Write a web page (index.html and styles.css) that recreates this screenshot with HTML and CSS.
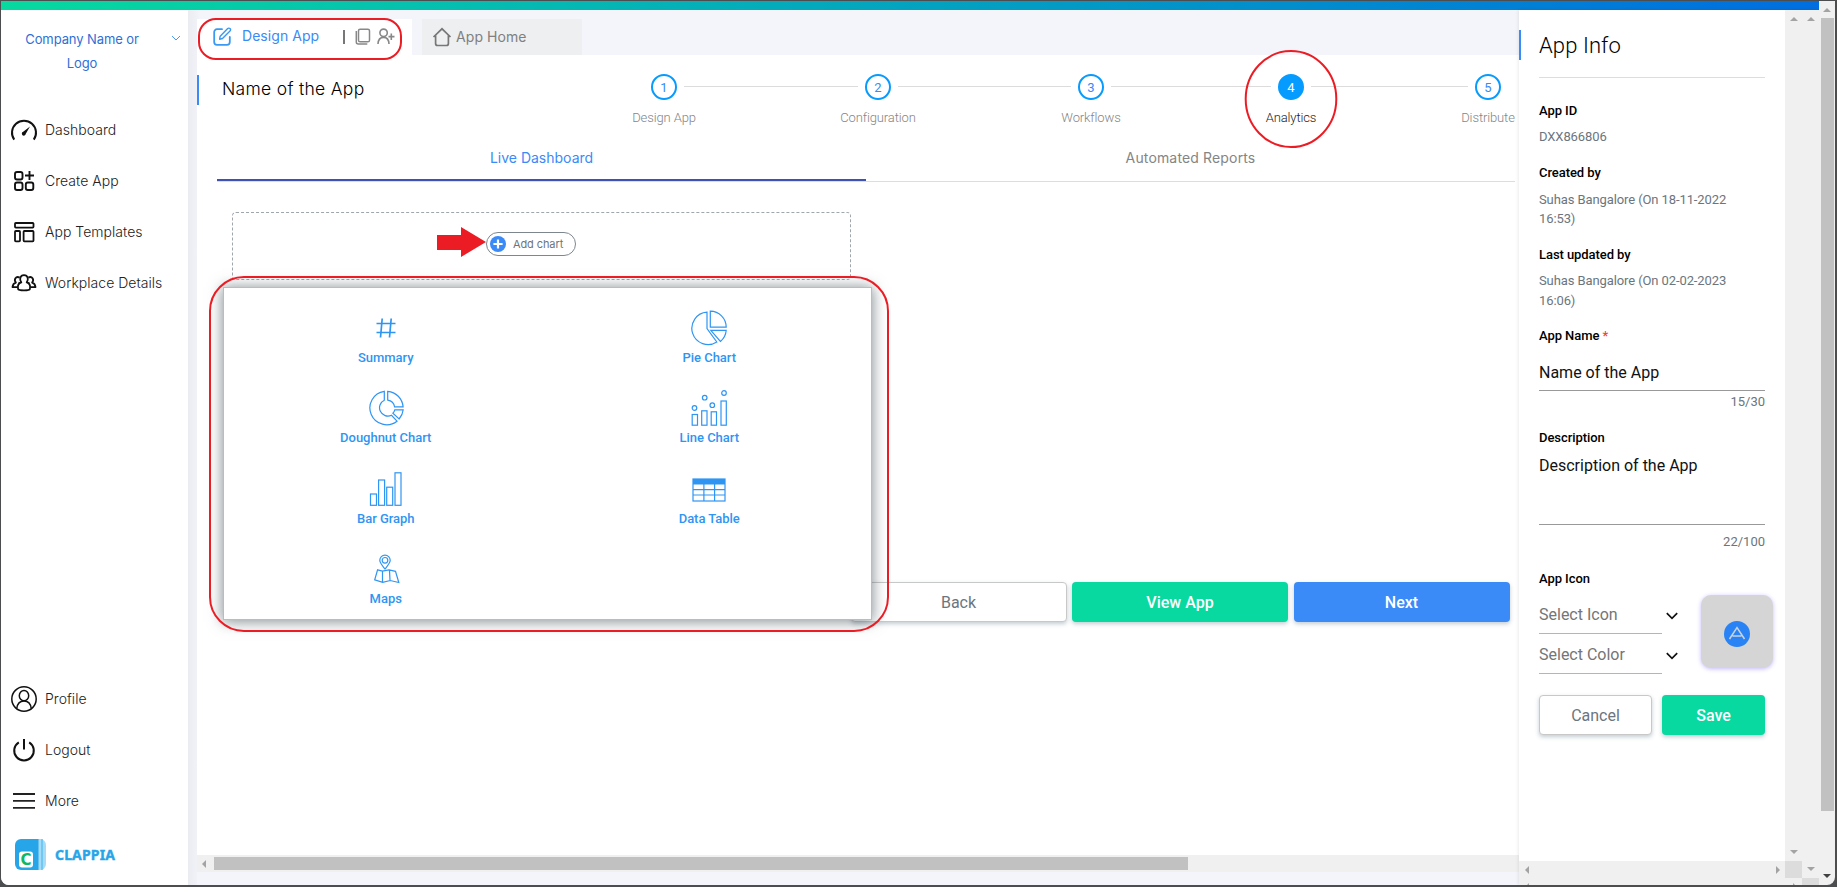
FILE: index.html
```html
<!DOCTYPE html>
<html lang="en">
<head>
<meta charset="utf-8">
<title>Clappia - Analytics</title>
<link rel="stylesheet" href="styles.css">
</head>
<body>
<div class="window">
  <div class="app">
    <div class="topbar"></div>
    <div class="columns">
      <aside class="sidebar">
        <div class="company">
          <span class="company-name">Company Name or Logo</span>
          <svg class="company-caret" width="10" height="6" viewBox="0 0 10 6"><path d="M1 1l4 4 4-4" fill="none" stroke="#4a9af5" stroke-width="1"/></svg>
        </div>
        <nav class="nav">
          <a class="nav-item"><svg class="nav-icon" viewBox="0 0 30 30"><path d="M5.2 24.6A12 12 0 1 1 24.8 24.6" fill="none" stroke="#111" stroke-width="2"/><path d="M21 11.5l-4.2 7.3a2 2 0 1 1-2.6-2z" fill="#111"/></svg><span>Dashboard</span></a>
          <a class="nav-item"><svg class="nav-icon" viewBox="0 0 30 30"><g fill="none" stroke="#111" stroke-width="1.9"><rect x="6" y="6" width="7.5" height="7.5" rx="2"/><rect x="6" y="16.5" width="7.5" height="7.5" rx="2"/><rect x="16.8" y="16.5" width="7.5" height="7.5" rx="2"/><path d="M20.5 5v9M16 9.5h9"/></g></svg><span>Create App</span></a>
          <a class="nav-item"><svg class="nav-icon" viewBox="0 0 30 30"><g fill="none" stroke="#111" stroke-width="1.8"><rect x="6" y="6" width="18.5" height="4.6" rx=".8"/><rect x="6" y="14" width="5" height="10.4" rx=".8"/><rect x="14.6" y="14" width="9.9" height="10.4" rx=".8"/></g></svg><span>App Templates</span></a>
          <a class="nav-item"><svg class="nav-icon" viewBox="0 0 30 30"><g fill="none" stroke="#111" stroke-width="1.8" stroke-linejoin="round"><path d="M12.300 14.400c-2-2.600-1.500-7.300 2.700-7.300s4.700 4.700 2.700 7.300c2.200.7 4 3 3.200 6.600-.4 1.800-11.400 1.800-11.800 0-.8-3.600 1-5.900 3.200-6.600z"/><path d="M10.700 9.600c-3.900-2-6.200 2.300-3.800 5-2.100.6-3.200 2.300-3.400 4.600h5.300M19.300 9.600c3.900-2 6.200 2.300 3.800 5 2.100.6 3.200 2.300 3.400 4.600h-5.300M9.500 14.600l1.300.7M20.500 14.600l-1.300.7"/></g></svg><span>Workplace Details</span></a>
        </nav>
        <nav class="nav nav-bottom">
          <a class="nav-item"><svg class="nav-icon" viewBox="0 0 30 30"><g fill="none" stroke="#111" stroke-width="1.5"><circle cx="15" cy="15" r="12.200"/><ellipse cx="15" cy="11.700" rx="4.700" ry="5.100"/><path d="M7.800 24.500c.5-4.500 3.300-7.500 7.200-7.500s6.700 3 7.200 7.500"/></g></svg><span>Profile</span></a>
          <a class="nav-item"><svg class="nav-icon" viewBox="0 0 30 30"><g fill="none" stroke="#111" stroke-width="2"><path d="M9.800 7.300a9.800 9.800 0 1 0 10.400 0"/><path d="M15 4v10.500"/></g></svg><span>Logout</span></a>
          <a class="nav-item"><svg class="nav-icon" viewBox="0 0 30 30"><path d="M4 8h22M4 14.900h22M4 21.800h22" stroke="#222" stroke-width="1.800"/></svg><span>More</span></a>
        </nav>
        <div class="brand">
          <svg width="32" height="31" viewBox="0 0 32 31"><rect x="10" width="21" height="31" rx="6" fill="#a5dbf7"/><path d="M27 0v31" stroke="#5fc0f0" stroke-width="1.500"/><path d="M6 0h17.500v31H6a6 6 0 0 1-6-6V6a6 6 0 0 1 6-6z" fill="#27a5e9"/><rect x="4" y="12.500" width="14" height="16" rx="3" fill="#fff"/></svg>
          <span class="brand-letter">C</span>
          <span class="brand-name">CLAPPIA</span>
        </div>
      </aside>

      <main class="main">
        <div class="apptabs">
          <div class="apptab active">
            <svg width="19" height="19" viewBox="0 0 19 19"><g fill="none" stroke="#3a9af2" stroke-width="1.800" stroke-linejoin="round" stroke-linecap="round"><path d="M9 2.200H4A2.800 2.800 0 0 0 1.200 5v10A2.800 2.800 0 0 0 4 17.800h10a2.800 2.800 0 0 0 2.800-2.800v-5"/><path d="M6.600 12.200l.6-3 7.500-7.600a1.500 1.500 0 0 1 2.300 2.300l-7.500 7.600z" stroke-width="1.400"/></g></svg>
            <span class="apptab-label">Design App</span>
            <span class="apptab-sep"></span>
            <svg class="copy" width="16" height="17" viewBox="0 0 16 17"><g fill="none" stroke="#888" stroke-width="1.500"><rect x="3.500" y="1.200" width="11" height="12.600" rx="1.600"/><path d="M1.300 3v11a2 2 0 0 0 2 2h9"/></g></svg>
            <svg class="adduser" width="18" height="17" viewBox="0 0 18 17"><g fill="none" stroke="#888" stroke-width="1.600"><circle cx="6.600" cy="4.800" r="3.700"/><path d="M1 16c.2-4.200 2.200-6.600 5.600-6.600s5.200 2.400 5.400 6.600M14.300 5.500v6.400M11.500 8.600h6"/></g></svg>
          </div>
          <div class="apptab home">
            <svg width="20" height="20" viewBox="0 0 20 20"><path d="M1.500 10L10 1.800 18.500 10M3.600 8.500v8c0 1.400.6 2 2 2h8.800c1.400 0 2-.6 2-2v-8" fill="none" stroke="#777" stroke-width="1.700"/></svg>
            <span>App Home</span>
          </div>
        </div>
        <div class="content">
          <header class="head">
            <h1 class="title">Name of the App</h1>
            <div class="stepper">
              <div class="step"><span class="dot">1</span><span class="step-label">Design App</span></div>
              <i class="line l1"></i>
              <div class="step"><span class="dot">2</span><span class="step-label">Configuration</span></div>
              <i class="line l2"></i>
              <div class="step"><span class="dot">3</span><span class="step-label">Workflows</span></div>
              <i class="line l3"></i>
              <div class="step current"><span class="dot">4</span><span class="step-label">Analytics</span></div>
              <i class="line l4"></i>
              <div class="step"><span class="dot">5</span><span class="step-label">Distribute</span></div>
            </div>
          </header>
          <div class="tabs">
            <div class="tab selected">Live Dashboard</div>
            <div class="tab reports">Automated Reports</div>
          </div>
          <section class="dropzone">
            <button class="addchart"><svg width="16" height="16" viewBox="0 0 16 16"><circle cx="8" cy="8" r="8" fill="#3a8af8"/><path d="M8 3.400v9.200M3.400 8h9.200" stroke="#fff" stroke-width="2.200"/></svg><span>Add chart</span></button>
          </section>
          <div class="actions">
            <button class="btn outline">Back</button>
            <button class="btn green">View App</button>
            <button class="btn blue">Next</button>
          </div>
          <div class="hscroll"><span class="tri left"></span><span class="thumb"></span></div>

          <div class="picker">
            <div class="choice"><svg width="36" height="36" viewBox="0 0 36 36"><path d="M14.200 8.500l-1.700 19M23.200 8.500l-1.700 19M8.500 13.500h19M8.500 22.500h19" fill="none" stroke="#2f95f3" stroke-width="1.700"/></svg><span>Summary</span></div>
            <div class="choice"><svg width="36" height="36" viewBox="0 0 36 36"><g class="thin"><path d="M16 2.200A16.200 16.200 0 1 0 25.800 32L16 18.500z"/><path d="M19.300 1.200v15.900h15.900A16 16 0 0 0 19.300 1.200z"/><path d="M19.800 20.300h15.400a16 16 0 0 1-5.800 11.200z"/></g></svg><span>Pie Chart</span></div>
            <div class="choice"><svg width="36" height="36" viewBox="0 0 36 36"><g class="thin"><path d="M16.300 1.300A16.800 16.800 0 1 0 29 31.200l-5.500-5.900A8.200 8.200 0 1 1 16.300 10.200z"/><path d="M19.700 1.300v8.800a8.200 8.200 0 0 1 6.900 6.800h8.500A16.900 16.900 0 0 0 19.700 1.300z"/><path d="M26.800 19.800h8.400a16.500 16.500 0 0 1-4.100 9.200l-6.200-5.800a8 8 0 0 0 1.900-3.400z"/></g></svg><span>Doughnut Chart</span></div>
            <div class="choice"><svg width="36" height="36" viewBox="0 0 36 36"><g class="thin"><rect x="1.200" y="24.500" width="5.300" height="10.700"/><rect x="10.700" y="20.800" width="5.300" height="14.400"/><rect x="20.200" y="21.800" width="5.300" height="13.400"/><rect x="30" y="11" width="5.300" height="24.200"/><circle cx="3.500" cy="18" r="2.300"/><circle cx="13.700" cy="7.700" r="2.300"/><circle cx="21.300" cy="15.200" r="2.300"/><circle cx="33" cy="3" r="2.300"/></g></svg><span>Line Chart</span></div>
            <div class="choice"><svg width="36" height="36" viewBox="0 0 36 36"><g class="thin"><rect x="2.500" y="23" width="6" height="11.300"/><rect x="10.600" y="9" width="6" height="25.300"/><rect x="18.700" y="16.200" width="6" height="18.100"/><rect x="27" y="1.800" width="6" height="32.500"/></g></svg><span>Bar Graph</span></div>
            <div class="choice"><svg width="36" height="36" viewBox="0 0 36 36"><g class="thin"><rect x="2" y="8" width="32" height="22"/><path d="M2 18.700h32M2 24h32M12.900 13v17M23.600 13v17"/></g><path d="M2 8h32v5.500H2z" fill="#2f95f3"/></svg><span>Data Table</span></div>
            <div class="choice"><svg width="36" height="36" viewBox="0 0 36 36"><g class="thin"><circle cx="17" cy="9.300" r="2.800"/><path d="M17 18c-3-3.800-5.200-6-5.200-8.700a5.200 5.200 0 0 1 10.400 0c0 2.700-2.200 4.900-5.200 8.700z"/><path d="M9.600 18.800l4.900 1.300 6.500-1.300 6.500 1.500 3.300 11.200-8.600-2-7.500 1.900-8-2.600zM14.500 20.100v11.300M21.500 19l.5 10.400"/></g></svg><span>Maps</span></div>
          </div>
        </div>
      </main>

      <aside class="info">
        <div class="info-body">
          <h2 class="info-title">App Info</h2>
          <div class="rule"></div>
          <div class="lbl first">App ID</div>
          <div class="val">DXX866806</div>
          <div class="lbl">Created by</div>
          <div class="val two">Suhas Bangalore (On 18-11-2022<br>16:53)</div>
          <div class="lbl">Last updated by</div>
          <div class="val two">Suhas Bangalore (On 02-02-2023<br>16:06)</div>
          <div class="lbl">App Name <span class="req">*</span></div>
          <div class="field name">Name of the App</div>
          <div class="count near">15/30</div>
          <div class="lbl">Description</div>
          <div class="field desc">Description of the App</div>
          <div class="count far">22/100</div>
          <div class="lbl">App Icon</div>
          <div class="iconrow">
            <div class="selects">
              <div class="select"><span>Select Icon</span><svg width="12" height="8" viewBox="0 0 12 8"><path d="M.8 1.200L6 6.300l5.200-5.100" fill="none" stroke="#111" stroke-width="1.700"/></svg></div>
              <div class="select"><span>Select Color</span><svg width="12" height="8" viewBox="0 0 12 8"><path d="M.8 1.200L6 6.300l5.200-5.100" fill="none" stroke="#111" stroke-width="1.700"/></svg></div>
            </div>
            <div class="tile"><svg width="26" height="26" viewBox="0 0 26 26"><circle cx="13" cy="13" r="13" fill="#2a83f5"/><path d="M5.500 18L13 6.500 20.500 18M8.500 15h9" fill="none" stroke="#c9d3de" stroke-width="1.500"/></svg></div>
          </div>
          <div class="info-actions"><button class="btn outline">Cancel</button><button class="btn green">Save</button></div>
        </div>
        <div class="gutter">
          <span class="tri up g1"></span><span class="tri up g2"></span>
          <span class="tri down g3"></span><span class="tri down g4"></span>
          <span class="corner c1"></span><span class="corner c2"></span>
        </div>
        <div class="info-scroll">
          <span class="tri left s1"></span><span class="tri right s2"></span>
          <span class="tri left s3"></span><span class="tri right s4"></span>
        </div>
      </aside>
    </div>
  </div>
  <div class="pagescroll"><span class="tri up"></span><span class="pagethumb"></span><span class="tri down dark"></span></div>

  <svg class="marks" width="1837" height="887" viewBox="0 0 1837 887">
    <g fill="none" stroke="#ec1c24" stroke-width="2">
      <rect x="199" y="19" width="202" height="40" rx="17"/>
      <ellipse cx="1291" cy="99" rx="45.300" ry="48"/>
      <rect x="210" y="277" width="678" height="354" rx="34"/>
    </g>
    <path d="M437 235h24v-8l25 15-25 15v-7h-24z" fill="#ec1c24"/>
  </svg>
</div>
</body>
</html>
```

FILE: styles.css
```css
* { box-sizing: border-box; }
body { margin: 0; width: 1837px; height: 887px; overflow: hidden; background: #4b4d4f; font-family: Roboto, sans-serif; }
button { font-family: inherit; margin: 0; padding: 0; }
.window { position: relative; width: 1837px; height: 887px; padding: 1px 2px 2px 1px; display: flex; }
.app { width: 1818px; height: 884px; background: #f4f5fa; border-bottom-left-radius: 8px; overflow: hidden; }
.topbar { height: 9px; background: linear-gradient(90deg, #07d99f 0%, #006ee0 100%); }
.columns { display: flex; height: 875px; }

/* left navigation */
.sidebar { width: 187px; flex: none; background: #fff; font-family: Inter, sans-serif; display: flex; flex-direction: column; }
.company { position: relative; padding: 16.500px 46px 0 21px; height: 94px; text-align: center; font-size: 13px; line-height: 24px; color: #2f6fd6; letter-spacing: 0; }
.company-name { display: block; margin: 0 -4px; letter-spacing: -.1px; }
.company-caret { position: absolute; right: 7px; top: 25px; }
.nav { display: flex; flex-direction: column; }
.nav-item { display: flex; align-items: center; height: 51px; padding-left: 8px; gap: 6px; font-size: 14px; font-weight: 350; color: #222; letter-spacing: .03px; }
.nav-icon { width: 30px; height: 30px; flex: none; }
.nav-bottom { margin-top: 365px; }
.brand { position: relative; margin: 13px 0 0 14px; display: flex; align-items: center; gap: 8px; height: 31px; }
.brand-letter { position: absolute; left: 4px; top: 13px; width: 14px; text-align: center; font: bold 15px/16px "DejaVu Sans", sans-serif; color: #0fb765; }
.brand-name { padding-top: 1px; font: bold 14px/20px "Noto Sans", sans-serif; letter-spacing: .15px; color: #27a5e9; -webkit-text-stroke: .4px #27a5e9; }

/* main column */
.main { width: 1331px; flex: none; padding: 9px 0 0 9px; background: linear-gradient(90deg, #ebecf2 0, #f1f2f7 9px, #f4f5fa 12px); }
.apptabs { display: flex; height: 36px; font-family: Inter, sans-serif; font-size: 14px; }
.apptab { display: flex; align-items: center; }
.apptab.active { width: 215px; background: #fff; padding: 0 0 1px 16px; color: #3a8af8; }
.apptab-label { margin-left: 10px; padding-bottom: 2px; width: 101px; letter-spacing: .05px; }
.apptab-sep { width: 2px; height: 14px; background: #777; }
.copy { margin-left: 10px; }
.adduser { margin-left: 6px; }
.apptab.home { width: 160px; margin-left: 10px; padding: 0 0 1px 10px; gap: 4px; background: #eeeff1; color: #808080; letter-spacing: .08px; }
.content { position: relative; height: 817px; background: #fff; }
.head { display: flex; height: 78px; }
.title { margin: 20px 0 0; width: 447px; height: 30px; border-left: 2px solid #3a8af8; padding-left: 23px; font: 350 17.500px/28px Inter, sans-serif; letter-spacing: .3px; color: #000; }
.stepper { display: flex; padding-top: 19px; }
.step { width: 40px; display: flex; flex-direction: column; align-items: center; color: #858585; }
.dot { width: 26px; height: 26px; flex: none; border: 2px solid #059bff; border-radius: 50%; font-size: 13px; line-height: 23px; text-align: center; color: #3a8af8; }
.step-label { margin-top: 9px; white-space: nowrap; font-weight: 300; font-size: 13px; line-height: 18px; letter-spacing: -.12px; }
.current { color: #222; }
.current .dot { background: #059bff; color: #fff; }
.line { height: 1px; margin-top: 12px; background: #dcdcdc; }
.l1 { width: 174px; } .l2 { width: 173px; } .l3 { width: 160px; } .l4 { width: 157px; }
.tabs { display: flex; margin: 0 4px 0 20px; width: 1298px; height: 49px; border-bottom: 1px solid #ddd; font-family: Inter, sans-serif; font-size: 14px; }
.tab { width: 649px; height: 48px; line-height: 50px; text-align: center; color: #858585; }
.tab.selected { color: #3a8af8; border-bottom: 2px solid #3f51b5; }
.tab.reports { letter-spacing: .15px; }
.dropzone { margin: 30px 0 0 35px; width: 619px; height: 68px; border: 1px dashed #a0a7ac; border-radius: 4px; padding: 19px 0 0 253px; }
.addchart { display: flex; align-items: center; gap: 7px; width: 90px; height: 24px; padding-left: 3px; border: 1px solid #7d878e; border-radius: 12px; background: #fff; color: #6c757d; font: 400 11px/14px Inter, sans-serif; letter-spacing: -.1px; }
.actions { display: flex; gap: 5.500px; margin: 302px 0 0 653.500px; }
.btn { height: 40px; border: 0; border-radius: 4px; font-size: 16px; box-shadow: 0 2px 4px rgba(60, 90, 110, .3); }
.actions .btn { width: 216px; }
.btn.outline { background: #fff; border: 1px solid #c8c8c8; color: #6c757d; }
.btn.green { background: #07d9a0; color: #fff; font-weight: 500; }
.btn.blue { background: #3a8af8; color: #fff; font-weight: 500; }
.hscroll { display: flex; align-items: center; margin-top: 233px; width: 1322px; height: 17px; background: #f0f0f0; }
.thumb { width: 974px; height: 13px; margin-left: 8px; background: #c1c1c1; }
.content::after { content: ""; display: block; height: 13px; background: #f4f5fa; }

/* chart type picker floating over the dashboard */
.picker { position: absolute; left: 27px; top: 233px; width: 647px; height: 331px; padding-top: 22px; display: grid; grid-template-columns: 1fr 1fr; grid-auto-rows: 80.300px; background: #fff; box-shadow: 0 0 0 1px #b9bdc0, 0 1px 13px 2px rgba(60, 75, 80, .6); }
.choice { display: flex; flex-direction: column; align-items: center; color: #2f95f3; font-weight: 500; font-size: 13px; line-height: 18px; gap: 3px; letter-spacing: -.03px; }
.choice svg { flex: none; }
.thin { fill: none; stroke: #2f95f3; stroke-width: 1.200; }

/* app info panel */
.info { width: 300px; flex: none; position: relative; display: grid; grid-template-columns: 266px 34px; grid-template-rows: 851px 24px; background: #f0f0f0; box-shadow: -1px 0 3px rgba(0, 0, 0, .08); }
.info-body { background: #fff; padding: 20px 20px 0; font-size: 13px; line-height: 20px; }
.info-title { margin: 0 0 17px -20px; padding-left: 18px; border-left: 2px solid #3a8af8; font-weight: 350; font-size: 22px; line-height: 31px; height: 30px; letter-spacing: .1px; color: #000; }
.rule { height: 1px; background: #ddd; }
.lbl { margin-top: 17px; font-weight: 500; letter-spacing: -.07px; color: #000; }
.lbl.first { margin-top: 23px; }
.req { color: #f44336; }
.val { margin-top: 5.500px; line-height: 19.500px; letter-spacing: -.1px; color: #6c757d; }
.val.two { margin-top: 6.500px; margin-bottom: -1px; }
.field { font-size: 16px; line-height: 24px; color: #111; border-bottom: 1px solid #999; }
.name { margin-top: 13px; height: 32px; padding-top: 1.500px; }
.desc { margin-top: 6px; height: 71px; }
.count { text-align: right; color: #6c757d; }
.near { padding-top: 1px; margin-bottom: -1px; }
.far { margin-top: 7px; }
.iconrow { display: flex; margin-top: 5px; }
.selects { width: 132px; }
.select { display: flex; height: 40px; padding-top: 8px; font-size: 16px; line-height: 25px; color: #757575; }
.select span { width: 123px; height: 32px; flex: none; border-bottom: 1px solid #b5b5b5; }
.select svg { margin: 10px 0 0 4px; flex: none; }
.tile { width: 72px; height: 73px; margin: 1px -8px 0 30px; flex: none; display: flex; align-items: center; justify-content: center; padding-top: 4px; border-radius: 10px; background: #d5d5d5; box-shadow: 0 1px 4px rgba(120, 100, 255, .45); }
.info-actions { display: flex; gap: 10px; margin-top: 21px; }
.info-actions .btn:first-child { width: 113px; }
.info-actions .btn:last-child { width: 103px; }
.gutter, .info-scroll { position: relative; }
.gutter { grid-row: 1 / 3; grid-column: 2; }
.info-scroll { grid-row: 2; grid-column: 1; }

/* scrollbar parts */
.tri { border: 4px solid transparent; width: 0; height: 0; }
.up { border-bottom-color: #a3a3a3; border-top-width: 0; }
.down { border-top-color: #a3a3a3; border-bottom-width: 0; }
.left { border-right-color: #a3a3a3; border-left-width: 0; }
.right { border-left-color: #a3a3a3; border-right-width: 0; }
.dark { border-top-color: #404040; }
.hscroll .tri { margin-left: 5px; }
.gutter .tri, .corner, .info-scroll .tri { position: absolute; }
.g1 { left: 5px; top: 7px; } .g2 { left: 22px; top: 7px; }
.g3 { left: 5px; top: 840px; } .g4 { left: 22px; top: 857px; }
.corner { width: 17px; height: 17px; background: #dcdcdc; }
.c1 { left: 0; top: 851px; } .c2 { left: 17px; top: 868px; height: 7px; }
.s1 { left: 6px; top: 5px; } .s2 { left: 257px; top: 5px; }
.s3 { left: 6px; top: 22px; } .s4 { left: 274px; top: 22px; }
.pagescroll { width: 16px; height: 884px; background: #f0f0f0; display: flex; flex-direction: column; align-items: center; padding-top: 7px; border-bottom-right-radius: 8px; }
.pagethumb { width: 13px; height: 793px; margin-top: 6px; background: #c1c1c1; }
.pagescroll .dark { margin-top: 63px; }

/* annotation strokes drawn over the page */
.marks { position: absolute; left: 0; top: 0; display: block; pointer-events: none; }
```
